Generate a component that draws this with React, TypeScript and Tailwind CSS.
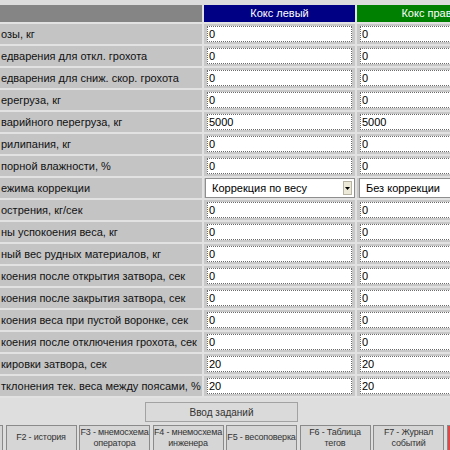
import React from 'react';

type Row = { label: string; left: string; right: string; select?: boolean };

const rows: Row[] = [
    { label: 'озы, кг', left: '0', right: '0' },
    { label: 'едварения для откл. грохота', left: '0', right: '0' },
    { label: 'едварения для сниж. скор. грохота', left: '0', right: '0' },
    { label: 'ерегруза, кг', left: '0', right: '0' },
    { label: 'варийного перегруза, кг', left: '5000', right: '5000' },
    { label: 'рилипания, кг', left: '0', right: '0' },
    { label: 'порной влажности, %', left: '0', right: '0' },
    { label: 'ежима коррекции', left: 'Коррекция по весу', right: 'Без коррекции', select: true },
    { label: 'острения, кг/сек', left: '0', right: '0' },
    { label: 'ны успокоения веса, кг', left: '0', right: '0' },
    { label: 'ный вес рудных материалов, кг', left: '0', right: '0' },
    { label: 'коения после открытия затвора, сек', left: '0', right: '0' },
    { label: 'коения после закрытия затвора, сек', left: '0', right: '0' },
    { label: 'коения веса при пустой воронке, сек', left: '0', right: '0' },
    { label: 'коения после отключения грохота, сек', left: '0', right: '0' },
    { label: 'кировки затвора, сек', left: '20', right: '20' },
    { label: 'тклонения тек. веса между поясами, %', left: '20', right: '20' },
];

// first key is scrolled off to the left, only its edge shows
const fkeys = [
    ['', ''],
    ['F2 - история', ''],
    ['F3 - мнемосхема', 'оператора'],
    ['F4 - мнемосхема', 'инженера'],
    ['F5 - весоповерка', ''],
    ['F6 - Таблица', 'тегов'],
    ['F7 - Журнал', 'событий'],
];

const ValueBox: React.FC<{ value: string }> = ({ value }) => (
    <div className="h-[16px] w-full bg-white border border-dotted border-[#6a6a6a] flex items-center pl-[1px] text-[11px] text-black leading-none">
        {value}
    </div>
);

const SelectBox: React.FC<{ value: string; arrow?: boolean }> = ({ value, arrow }) => (
    <div className="h-[20px] w-full bg-white border border-[#8e8e8e] flex items-center justify-between pl-[6px] pr-[2px] text-[11px] text-black">
        <span>{value}</span>
        {arrow && (
            <span className="w-[9px] h-[14px] bg-[#ece9d8] border border-[#b8b4a4] flex items-center justify-center">
                <svg width="5" height="3" viewBox="0 0 5 3"><path d="M0 0h5L2.5 3z" fill="#000" /></svg>
            </span>
        )}
    </div>
);

export default function App() {
    return (
        <div className="w-[450px] h-[450px] overflow-hidden bg-[#dedede] font-['Liberation_Sans',Arial,sans-serif]">
            <div className="w-[510px]">
                <div className="h-[5px] bg-[#dcdcdc]" />
                <div className="grid grid-cols-[202px_151px_153px] gap-x-[2px] gap-y-[2px] bg-[#e2e2e2] pb-[2px]">
                    <div className="h-[17px] bg-[#858585]" />
                    <div className="h-[17px] bg-[#000085] text-white text-[11px] flex items-center justify-center">Кокс левый</div>
                    <div className="h-[17px] bg-[#008000] text-white text-[11px] flex items-center justify-center">Кокс правый</div>
                    {rows.map((r, i) => (
                        <React.Fragment key={i}>
                            <div className="h-[20px] bg-[#c4c4c4] flex items-center pl-[1px] text-[11px] text-[#111] whitespace-nowrap overflow-hidden">
                                {r.label}
                            </div>
                            <div className={`h-[20px] bg-[#c8c8c8] flex items-center ${r.select ? 'pl-[1px] pr-0' : 'pl-[3px] pr-[3px]'}`}>
                                {r.select ? <SelectBox value={r.left} arrow /> : <ValueBox value={r.left} />}
                            </div>
                            <div className={`h-[20px] bg-[#c8c8c8] flex items-center ${r.select ? 'pl-[2px]' : 'pl-[3px] pr-[3px]'}`}>
                                {r.select ? <SelectBox value={r.right} /> : <ValueBox value={r.right} />}
                            </div>
                        </React.Fragment>
                    ))}
                </div>
                <div className="pt-[4px] pl-[145px]">
                    <div className="w-[153px] h-[20px] bg-[#dadada] border border-[#a2a2a2] flex items-center justify-center text-[10px] text-[#333]">
                        Ввод заданий
                    </div>
                </div>
                <div className="flex gap-[2.5px] mt-[3px] ml-[-68px]">
                    {fkeys.map(([a, b], i) => (
                        <div key={i} className="w-[71px] h-[30px] shrink-0 bg-[#d6d6d6] border border-[#8a8a8a] flex flex-col items-center pt-[1px] text-[9px] leading-[11px] text-[#333] whitespace-nowrap tracking-[-0.2px]">
                            {b ? (<><span>{a}</span><span>{b}</span></>) : <span className="mt-[5px]">{a}</span>}
                        </div>
                    ))}
                    <div className="w-[71px] h-[30px] shrink-0 bg-[#e04848] border border-[#8a8a8a]" />
                </div>
            </div>
        </div>
    );
}
